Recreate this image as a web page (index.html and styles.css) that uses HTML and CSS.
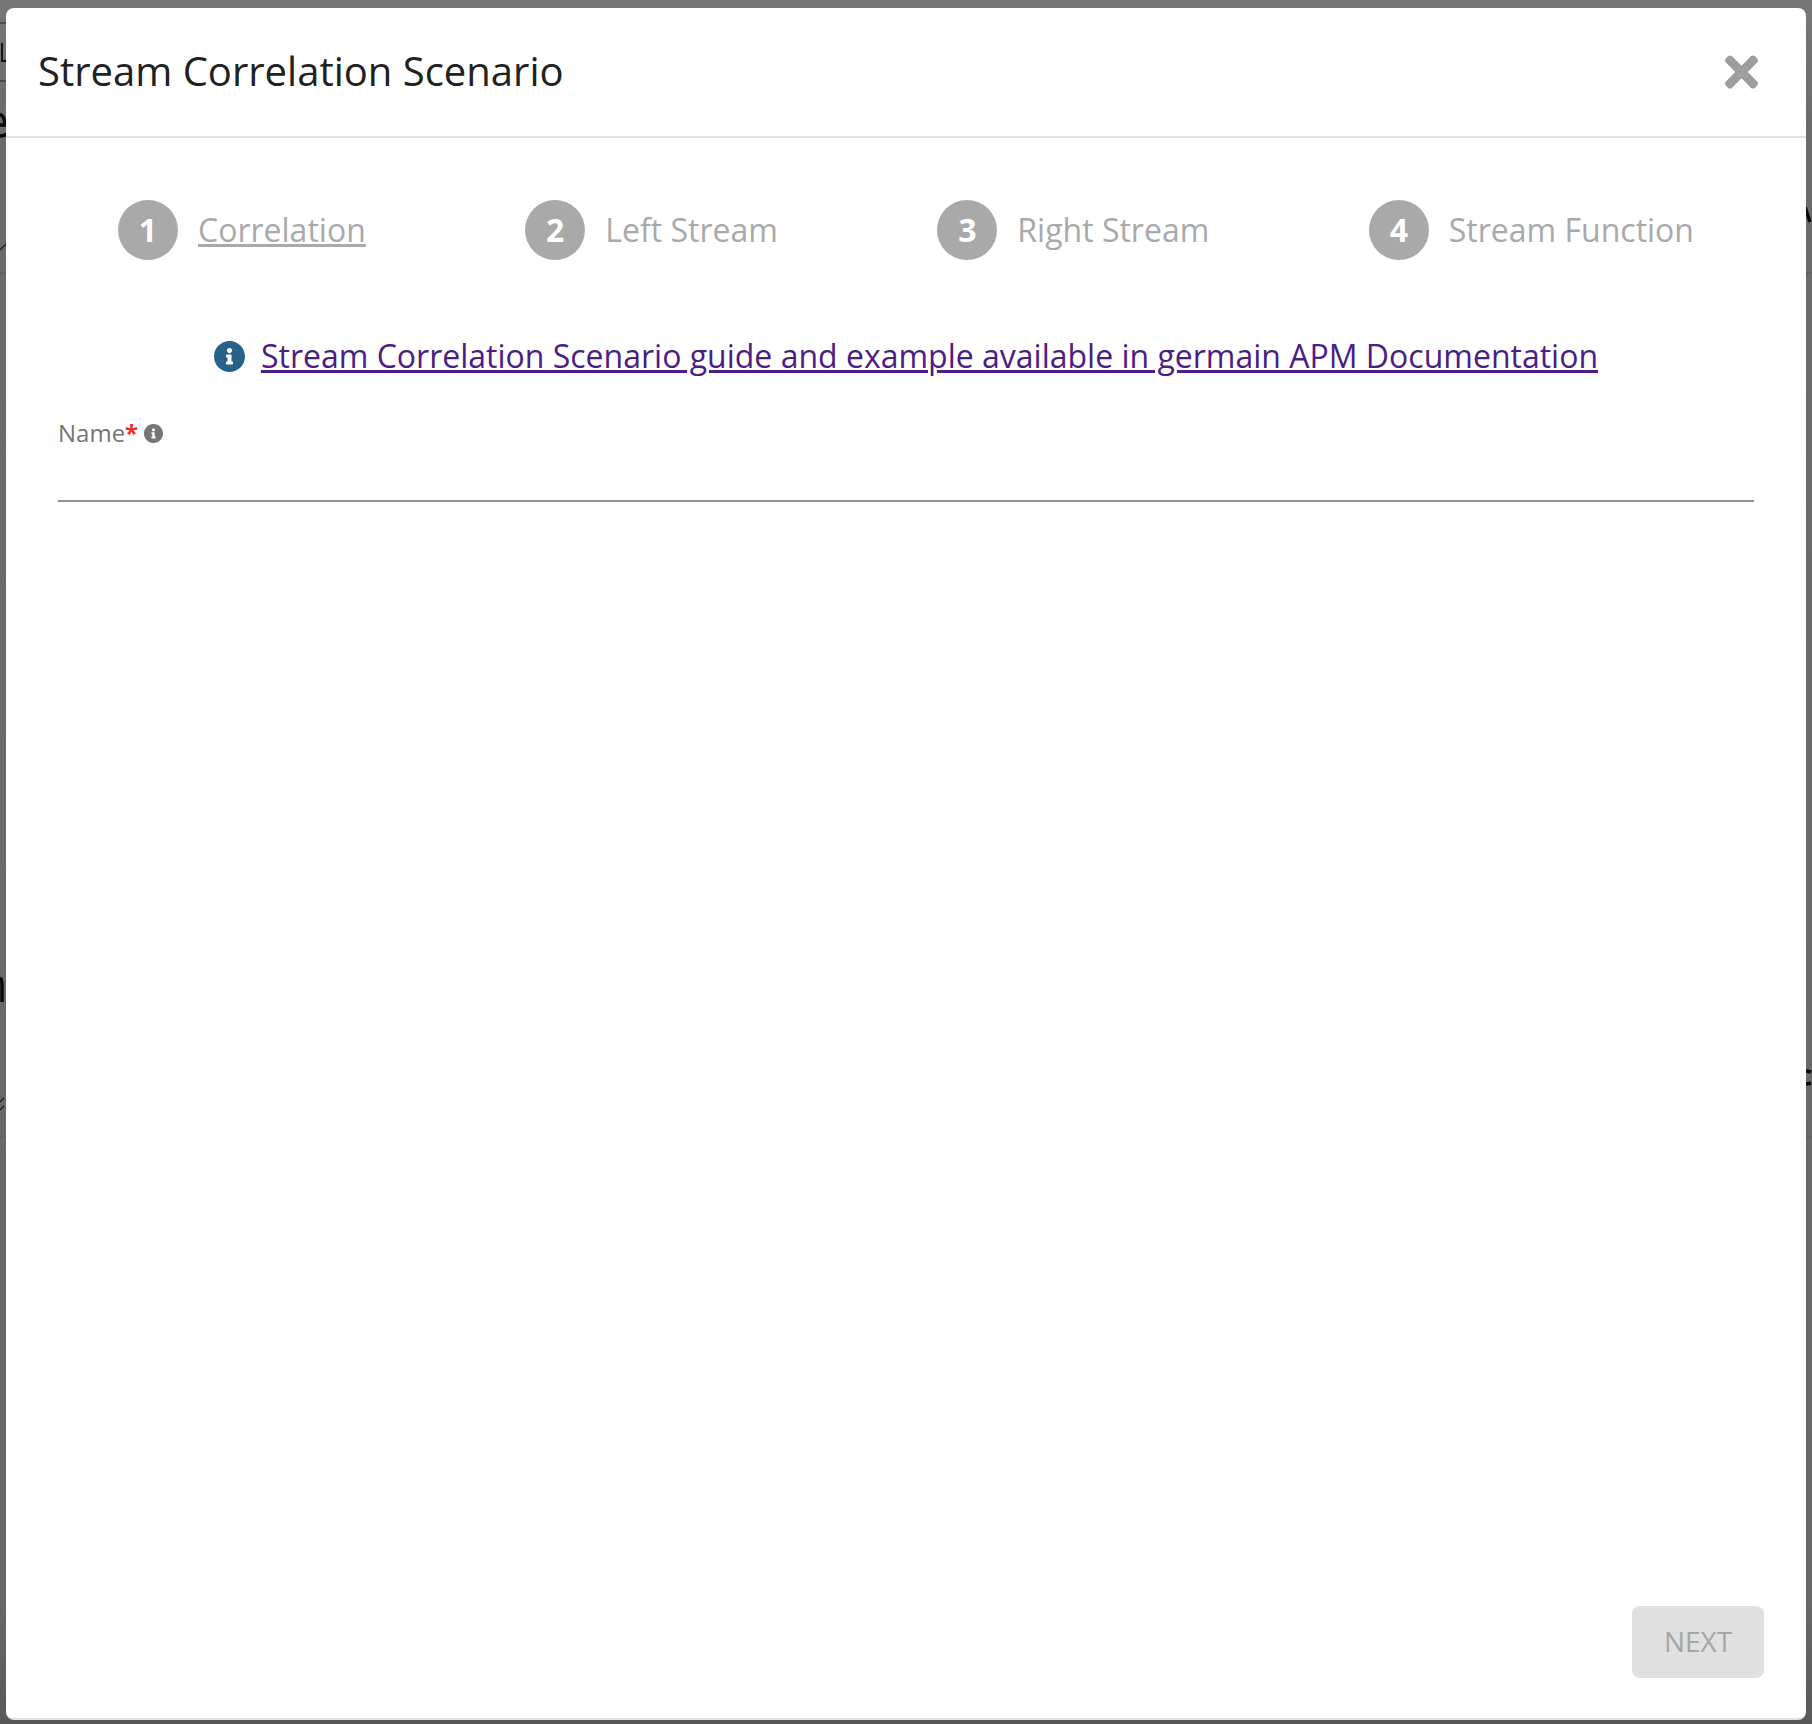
FILE: index.html
```
<!DOCTYPE html>
<html lang="en">
<head>
    <meta charset="UTF-8">
    <meta name="viewport" content="width=device-width, initial-scale=1.0">
    <title>Stream Correlation Scenario</title>
    <link rel="stylesheet" href="styles.css">
</head>
<body>
    <svg class="page-behind" width="1812" height="1724" aria-hidden="true">
        <g fill="#4b4b4b">
            <rect x="0" y="22" width="8" height="2"/>
            <rect x="0" y="80" width="8" height="2"/>
        </g>
        <g fill="#626262">
            <rect x="0" y="272" width="8" height="2"/>
            <rect x="1804" y="272" width="8" height="2"/>
            <rect x="0" y="1136" width="8" height="2"/>
            <rect x="1804" y="1136" width="8" height="2"/>
        </g>
        <g fill="none" stroke="#222" stroke-width="1.5">
            <path d="M0 250l7 -7"/>
            <path d="M0 1102l4 -4M0 1110l4 -4"/>
        </g>
        <g fill="none" stroke="#0a0a0a" stroke-width="3.5">
            <path d="M2 43v18h6" stroke-width="1.8"/>
            <path d="M0 114q5 3 5 11H0M0 136q4 0 7 -2"/>
            <path d="M0 978q2 1 2 7v17"/>
            <path d="M1811 1072q-3 -1 -6 -1M1811 1083q-3 1 -6 1"/>
            <path d="M1805 207l5 15"/>
        </g>
    </svg>

    <div class="modal">
        <div class="modal-header">
            <h2 class="modal-title">Stream Correlation Scenario</h2>
            <svg class="close-icon" viewBox="0 80 352 352">
                <path d="M242.72 256l100.07-100.07c12.28-12.28 12.28-32.19 0-44.48l-22.24-22.24c-12.28-12.28-32.19-12.28-44.48 0L176 189.28 75.93 89.21c-12.28-12.28-32.19-12.28-44.48 0L9.21 111.45c-12.28 12.28-12.28 32.19 0 44.48L109.28 256 9.21 356.07c-12.28 12.28-12.28 32.19 0 44.48l22.24 22.24c12.28 12.28 32.2 12.28 44.48 0L176 322.72l100.07 100.07c12.28 12.28 32.2 12.28 44.48 0l22.24-22.24c12.28-12.28 12.28-32.19 0-44.48L242.72 256z"/>
            </svg>
        </div>

        <div class="modal-body">
            <div class="steps">
                <div class="step active"><span class="step-number">1</span><span class="step-label">Correlation</span></div>
                <div class="step"><span class="step-number">2</span><span class="step-label">Left Stream</span></div>
                <div class="step"><span class="step-number">3</span><span class="step-label">Right Stream</span></div>
                <div class="step"><span class="step-number">4</span><span class="step-label">Stream Function</span></div>
            </div>

            <div class="guide">
                <svg class="guide-icon" viewBox="8 8 496 496">
                    <path d="M256 8C119 8 8 119 8 256s111 248 248 248 248-111 248-248S393 8 256 8zm0 110c23 0 42 19 42 42s-19 42-42 42-42-19-42-42 19-42 42-42zm56 254c0 7-5 12-12 12h-88c-7 0-12-5-12-12v-24c0-7 5-12 12-12h12v-64h-12c-7 0-12-5-12-12v-24c0-7 5-12 12-12h64c7 0 12 5 12 12v100h12c7 0 12 5 12 12v24z"/>
                </svg>
                <a class="guide-link" href="#">Stream Correlation Scenario guide and example available in germain APM Documentation</a>
            </div>

            <div class="field">
                <label class="field-label" for="name">Name<span class="required">*</span>
                    <svg class="field-icon" viewBox="8 8 496 496">
                        <path d="M256 8C119 8 8 119 8 256s111 248 248 248 248-111 248-248S393 8 256 8zm0 110c23 0 42 19 42 42s-19 42-42 42-42-19-42-42 19-42 42-42zm56 254c0 7-5 12-12 12h-88c-7 0-12-5-12-12v-24c0-7 5-12 12-12h12v-64h-12c-7 0-12-5-12-12v-24c0-7 5-12 12-12h64c7 0 12 5 12 12v100h12c7 0 12 5 12 12v24z"/>
                    </svg>
                </label>
                <input type="text" class="field-input" id="name">
            </div>
        </div>

        <div class="modal-footer">
            <button class="next-button" disabled>NEXT</button>
        </div>
    </div>
</body>
</html>
```
FILE: styles.css
```
* {
    box-sizing: border-box;
}
body {
    margin: 0;
    height: 1724px;
    padding: 8px 6px 4px;
    overflow: hidden;
    background: linear-gradient(#777 0, #6b6b6b 120px, #686868 1600px, #585858 1724px);
    font-family: "Open Sans", "Noto Sans", sans-serif;
}
/* dimmed page showing at the edges of the modal */
.page-behind {
    position: absolute;
    top: 0;
    left: 0;
}
.modal {
    position: relative;
    display: flex;
    flex-direction: column;
    height: 1712px;
    background-color: #fff;
    border-bottom: 2px solid #e0e0e0;
    border-radius: 8px;
}
.modal-header {
    display: flex;
    justify-content: space-between;
    align-items: center;
    height: 130px;
    padding: 0 48px 0 32px;
    border-bottom: 2px solid #e0e0e0;
}
.modal-title {
    margin: 0;
    padding-bottom: 2px;
    font-size: 40px;
    font-weight: 400;
    line-height: 54px;
    color: #212121;
}
.close-icon {
    width: 33px;
    height: 34px;
    fill: #9e9e9e;
}
.modal-body {
    flex: 1;
    padding: 62px 52px 0;
}
.steps {
    display: flex;
    justify-content: space-between;
    padding: 0 60px;
}
.step {
    display: flex;
    align-items: center;
    gap: 20px;
    font-size: 32px;
    line-height: 44px;
    color: #a9a9a9;
}
.step-number {
    width: 60px;
    height: 60px;
    border-radius: 50%;
    background-color: #a9a9a9;
    color: #fff;
    font-weight: 700;
    line-height: 60px;
    text-align: center;
}
.active .step-label {
    text-decoration: underline;
}
.guide {
    display: flex;
    justify-content: center;
    align-items: center;
    gap: 16px;
    margin-top: 74px;
    font-size: 32px;
    line-height: 44px;
}
.guide-icon {
    width: 31px;
    height: 31px;
    fill: #27628b;
}
.guide-link {
    color: #4b1d85;
}
.field {
    margin-top: 36px;
}
.field-label {
    display: flex;
    align-items: center;
    height: 36px;
    font-size: 24px;
    color: #757575;
}
.required {
    color: #f3301f;
    font-weight: 700;
}
.field-icon {
    width: 19px;
    height: 19px;
    margin: 3px 0 0 6px;
    fill: #757575;
}
.field-input {
    display: block;
    width: 100%;
    height: 52px;
    padding: 0;
    border: 0;
    border-bottom: 2px solid #919191;
    outline: none;
    background: none;
    font: inherit;
}
.modal-footer {
    display: flex;
    justify-content: flex-end;
    padding: 0 42px 40px;
}
.next-button {
    width: 132px;
    height: 72px;
    padding: 0 0 2px;
    border: 0;
    border-radius: 8px;
    background-color: #e0e0e0;
    color: #a6a6a6;
    font-family: inherit;
    font-size: 28px;
}
```
